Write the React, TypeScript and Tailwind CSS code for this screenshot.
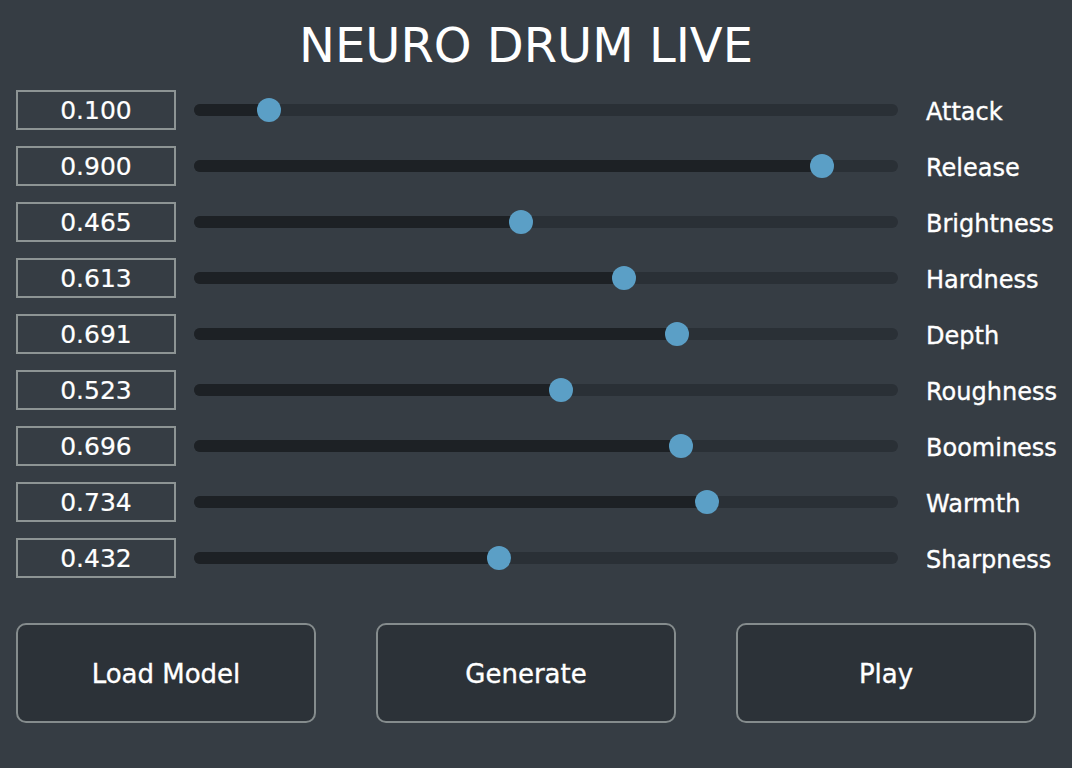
import React from 'react';

const params: { name: string; value: number }[] = [
  { name: 'Attack', value: 0.1 },
  { name: 'Release', value: 0.9 },
  { name: 'Brightness', value: 0.465 },
  { name: 'Hardness', value: 0.613 },
  { name: 'Depth', value: 0.691 },
  { name: 'Roughness', value: 0.523 },
  { name: 'Boominess', value: 0.696 },
  { name: 'Warmth', value: 0.734 },
  { name: 'Sharpness', value: 0.432 },
];

const Slider: React.FC<{ value: number }> = ({ value }) => {
  const pos = 6 + value * 691;
  return (
    <div className="relative h-3 w-[704px] shrink-0 rounded-full bg-[#2a3036]">
      <div className="h-3 rounded-full bg-[#1d2125]" style={{ width: pos }} />
      <div
        className="absolute top-1/2 h-6 w-6 -translate-y-1/2 rounded-full bg-[#5b9fc6]"
        style={{ left: pos - 12 }}
      />
    </div>
  );
};

const App: React.FC = () => {
  return (
    <div
      className="min-h-screen w-full overflow-hidden bg-[#363d44] text-white [-webkit-text-stroke:0.35px_white]"
      style={{ fontFamily: '"DejaVu Sans", sans-serif' }}
    >
      <div className="w-[1052px] px-4">
        <h1 className="h-[90px] pt-[14px] text-center text-[48px] leading-[62px] [-webkit-text-stroke:0px]">
          NEURO DRUM LIVE
        </h1>

        <div className="flex flex-col gap-4">
          {params.map((p) => (
            <div key={p.name} className="flex h-10 items-center">
              <div className="flex h-10 w-40 shrink-0 items-center justify-center border-2 border-[#8d9494] pt-px text-[25px] [-webkit-text-stroke:0.2px_white]">
                {p.value.toFixed(3)}
              </div>
              <div className="ml-[18px] shrink-0">
                <Slider value={p.value} />
              </div>
              <div className="ml-7 shrink-0 whitespace-nowrap pt-[3px] text-[24px]">{p.name}</div>
            </div>
          ))}
        </div>

        <div className="mt-[45px] flex justify-between">
          {['Load Model', 'Generate', 'Play'].map((b) => (
            <button
              key={b}
              className="flex h-[100px] w-[300px] items-center justify-center rounded-[10px] border-2 border-[#858c8d] bg-[#2c3238] pt-[2px] text-[26px] text-white"
            >
              {b}
            </button>
          ))}
        </div>
      </div>
    </div>
  );
};

export default App;
